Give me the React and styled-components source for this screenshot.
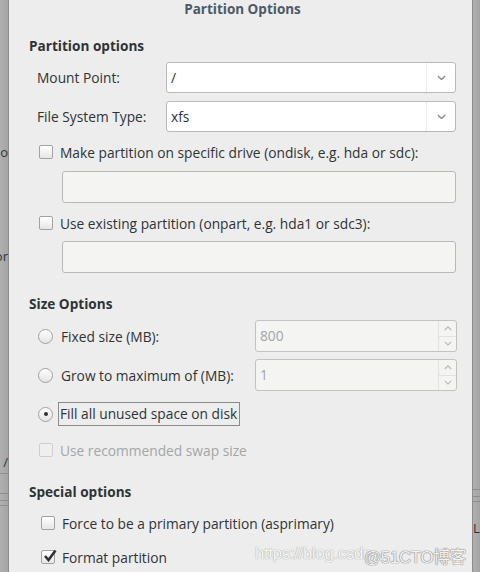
import styled, { createGlobalStyle } from "styled-components";

const GlobalStyle = createGlobalStyle`
  html, body {
    margin: 0;
    padding: 0;
    background: #a7a7a7;
  }
  body {
    font-family: "Open Sans", "DejaVu Sans", sans-serif;
    color: #2e3436;
  }
`;

const Screen = styled.div`
  position: relative;
  width: 480px;
  height: 572px;
  display: flex;
  overflow: hidden;
`;

const Backdrop = styled.div`
  width: ${(p) => p.w}px;
  flex: none;
  display: flex;
  flex-direction: column;
  align-items: ${(p) => (p.right ? "flex-start" : "flex-end")};
  background: linear-gradient(to right, #b0b0b0, #a4a4a4);
  border-${(p) => (p.right ? "left" : "right")}: 1px solid #8c8c8c;
  font-size: 13px;
  color: #2e3436;
  overflow: hidden;
`;

const Fragment = styled.div`
  margin-top: ${(p) => p.mt || 0}px;
  height: 16px;
  line-height: 16px;
  white-space: nowrap;
`;

const Rule = styled.div`
  margin-top: ${(p) => p.mt || 0}px;
  width: 100%;
  height: 1px;
  background: #8e8e8e;
`;

const Dialog = styled.div`
  flex: 1;
  background: #ededed;
  padding: 0 16px 0 20px;
  display: flex;
  flex-direction: column;
`;

const Title = styled.div`
  height: 20px;
  line-height: 18px;
  text-align: center;
  font-weight: 700;
  font-size: 13.5px;
  color: #4c5a68;
`;

const Heading = styled.div`
  margin-top: ${(p) => p.mt || 0}px;
  height: 20px;
  line-height: 20px;
  font-weight: 700;
  font-size: 13.6px;
  color: #2e3436;
`;

const FieldRow = styled.div`
  margin-top: ${(p) => p.mt || 0}px;
  display: grid;
  grid-template-columns: 129px 1fr;
  align-items: center;
  padding-left: 8px;
`;

const Label = styled.div`
  font-size: 13.75px;
  color: ${(p) => (p.disabled ? "#a3a6a6" : "#2e3436")};
  white-space: nowrap;
`;

const Combo = styled.div`
  height: 31px;
  box-sizing: border-box;
  display: flex;
  background: #fff;
  border: 1px solid #b9b9b6;
  border-radius: 3px;
`;

const ComboText = styled.div`
  flex: 1;
  padding-left: 4px;
  font-size: 13.75px;
  line-height: 29px;
`;

const ComboButton = styled.div`
  width: 28px;
  border-left: 1px solid #ececec;
  display: flex;
  align-items: center;
  justify-content: center;
  color: #8a8a8a;
`;

const CheckRow = styled.div`
  margin-top: ${(p) => p.mt || 0}px;
  height: ${(p) => p.h || 20}px;
  display: flex;
  align-items: center;
  gap: 7px;
  padding-left: ${(p) => p.indent || 10}px;
`;

const Box = styled.div`
  width: 12px;
  height: 12px;
  flex: none;
  border: 1px solid ${(p) => (p.disabled ? "#cfcfcf" : "#a2a2a2")};
  border-radius: 2px;
  background: ${(p) =>
    p.disabled ? "#efefef" : "linear-gradient(#ffffff, #e6e6e6)"};
  display: flex;
  align-items: center;
  justify-content: center;
`;

const Radio = styled.div`
  width: 13px;
  height: 13px;
  flex: none;
  border: 1px solid #a2a2a2;
  border-radius: 50%;
  background: linear-gradient(#ffffff, #e4e4e4);
  display: flex;
  align-items: center;
  justify-content: center;
  &::after {
    content: "";
    display: ${(p) => (p.checked ? "block" : "none")};
    width: 4px;
    height: 4px;
    border-radius: 50%;
    background: #2e3436;
  }
`;

const FocusLabel = styled.div`
  font-size: 13.75px;
  padding: 3px 2px 3px 1px;
  border: 1px solid #8b8b8b;
  margin-left: -2px;
  line-height: 16px;
`;

const Entry = styled.div`
  margin-top: ${(p) => p.mt || 0}px;
  margin-left: 33px;
  height: 32px;
  box-sizing: border-box;
  background: #f4f4f3;
  border: 1px solid #b9b9b6;
  border-radius: 3px;
`;

const SpinRow = styled.div`
  margin-top: ${(p) => p.mt || 0}px;
  display: grid;
  grid-template-columns: 217px 1fr;
  align-items: center;
  padding-left: 9px;
  margin-right: -1px;
`;

const RadioLabel = styled.div`
  display: flex;
  align-items: center;
  gap: 8px;
`;

const Spin = styled.div`
  height: 32px;
  box-sizing: border-box;
  display: flex;
  background: #f4f4f3;
  border: 1px solid #c3c3c0;
  border-radius: 3px;
`;

const SpinValue = styled.div`
  flex: 1;
  padding-left: 4px;
  font-size: 13.75px;
  line-height: 30px;
  color: #a3a6a6;
`;

const SpinButtons = styled.div`
  width: 17px;
  border-left: 1px solid #e2e2e0;
  display: flex;
  flex-direction: column;
`;

const SpinButton = styled.div`
  flex: 1;
  display: flex;
  align-items: center;
  justify-content: center;
  color: #b8b8b8;
  & + & {
    border-top: 1px solid #e2e2e0;
  }
`;

const Watermark = styled.div`
  position: absolute;
  left: 255px;
  top: 544px;
  display: flex;
  font-family: "Liberation Sans", "Noto Sans CJK SC", sans-serif;
  font-size: 16.8px;
  white-space: nowrap;
  letter-spacing: -0.3px;
`;

const MarkPart = styled.span`
  color: ${(p) => (p.strong ? "#f2f2f2" : "#f6f6f6")};
  text-shadow: ${(p) =>
    p.strong
      ? "0 0 1px #8a8a8a, 0 0 1px #8a8a8a, 0 0 1px #8a8a8a"
      : "0 0 1px #a8a8a8, 0 0 1px #a8a8a8"};
  margin-left: ${(p) => p.ml || 0}px;
`;

const Chevron = ({ up, size = 9, w = 1.6 }) => (
  <svg width={size} height={size * 0.6} viewBox="0 0 10 6">
    <path
      d={up ? "M1 5 L5 1 L9 5" : "M1 1 L5 5 L9 1"}
      fill="none"
      stroke="currentColor"
      strokeWidth={w}
    />
  </svg>
);

const Check = () => (
  <svg width="14" height="13" viewBox="0 0 14 13" style={{ marginTop: -4, marginRight: -4 }}>
    <path d="M2 7 L5.5 11 L12.5 1.5" fill="none" stroke="#2e3436" strokeWidth="2.6" />
  </svg>
);

const ComboField = ({ label, value, mt }) => (
  <FieldRow mt={mt}>
    <Label>{label}</Label>
    <Combo>
      <ComboText>{value}</ComboText>
      <ComboButton>
        <Chevron />
      </ComboButton>
    </Combo>
  </FieldRow>
);

const SpinField = ({ label, value, mt }) => (
  <SpinRow mt={mt}>
    <RadioLabel>
      <Radio />
      <Label>{label}</Label>
    </RadioLabel>
    <Spin>
      <SpinValue>{value}</SpinValue>
      <SpinButtons>
        <SpinButton>
          <Chevron up size={8} w={1.4} />
        </SpinButton>
        <SpinButton>
          <Chevron size={8} w={1.4} />
        </SpinButton>
      </SpinButtons>
    </Spin>
  </SpinRow>
);

export default function App() {
  return (
    <>
      <GlobalStyle />
      <Screen>
        <Backdrop w={8}>
          <Fragment mt={144}>o</Fragment>
          <Fragment mt={88}>or</Fragment>
          <Fragment mt={190}>/</Fragment>
          <Rule mt={3} />
          <Rule mt={19} />
          <Rule mt={6} />
          <Rule mt={4} />
        </Backdrop>
        <Dialog>
          <Title>Partition Options</Title>
          <Heading mt={16}>Partition options</Heading>
          <ComboField mt={6} label="Mount Point:" value="/" />
          <ComboField mt={8} label="File System Type:" value="xfs" />
          <CheckRow mt={10}>
            <Box />
            <Label>Make partition on specific drive (ondisk, e.g. hda or sdc):</Label>
          </CheckRow>
          <Entry mt={9} />
          <CheckRow mt={10}>
            <Box />
            <Label>Use existing partition (onpart, e.g. hda1 or sdc3):</Label>
          </CheckRow>
          <Entry mt={8} />
          <Heading mt={21}>Size Options</Heading>
          <SpinField mt={6} label="Fixed size (MB):" value="800" />
          <SpinField mt={7} label="Grow to maximum of (MB):" value="1" />
          <CheckRow mt={11} h={24} indent={9}>
            <Radio checked />
            <FocusLabel>Fill all unused space on disk</FocusLabel>
          </CheckRow>
          <CheckRow mt={14}>
            <Box disabled />
            <Label disabled>Use recommended swap size</Label>
          </CheckRow>
          <Heading mt={22}>Special options</Heading>
          <CheckRow mt={11} indent={12}>
            <Box />
            <Label>Force to be a primary partition (asprimary)</Label>
          </CheckRow>
          <CheckRow mt={14} indent={12}>
            <Box>
              <Check />
            </Box>
            <Label>Format partition</Label>
          </CheckRow>
        </Dialog>
        <Backdrop w={7} right>
          <Rule mt={489} />
          <Rule mt={6} />
          <Rule mt={4} />
          <Fragment mt={18}>L</Fragment>
        </Backdrop>
        <Watermark>
          <MarkPart>https://blog.csdn</MarkPart>
          <MarkPart strong ml={-8}>@51CTO博客</MarkPart>
        </Watermark>
      </Screen>
    </>
  );
}
